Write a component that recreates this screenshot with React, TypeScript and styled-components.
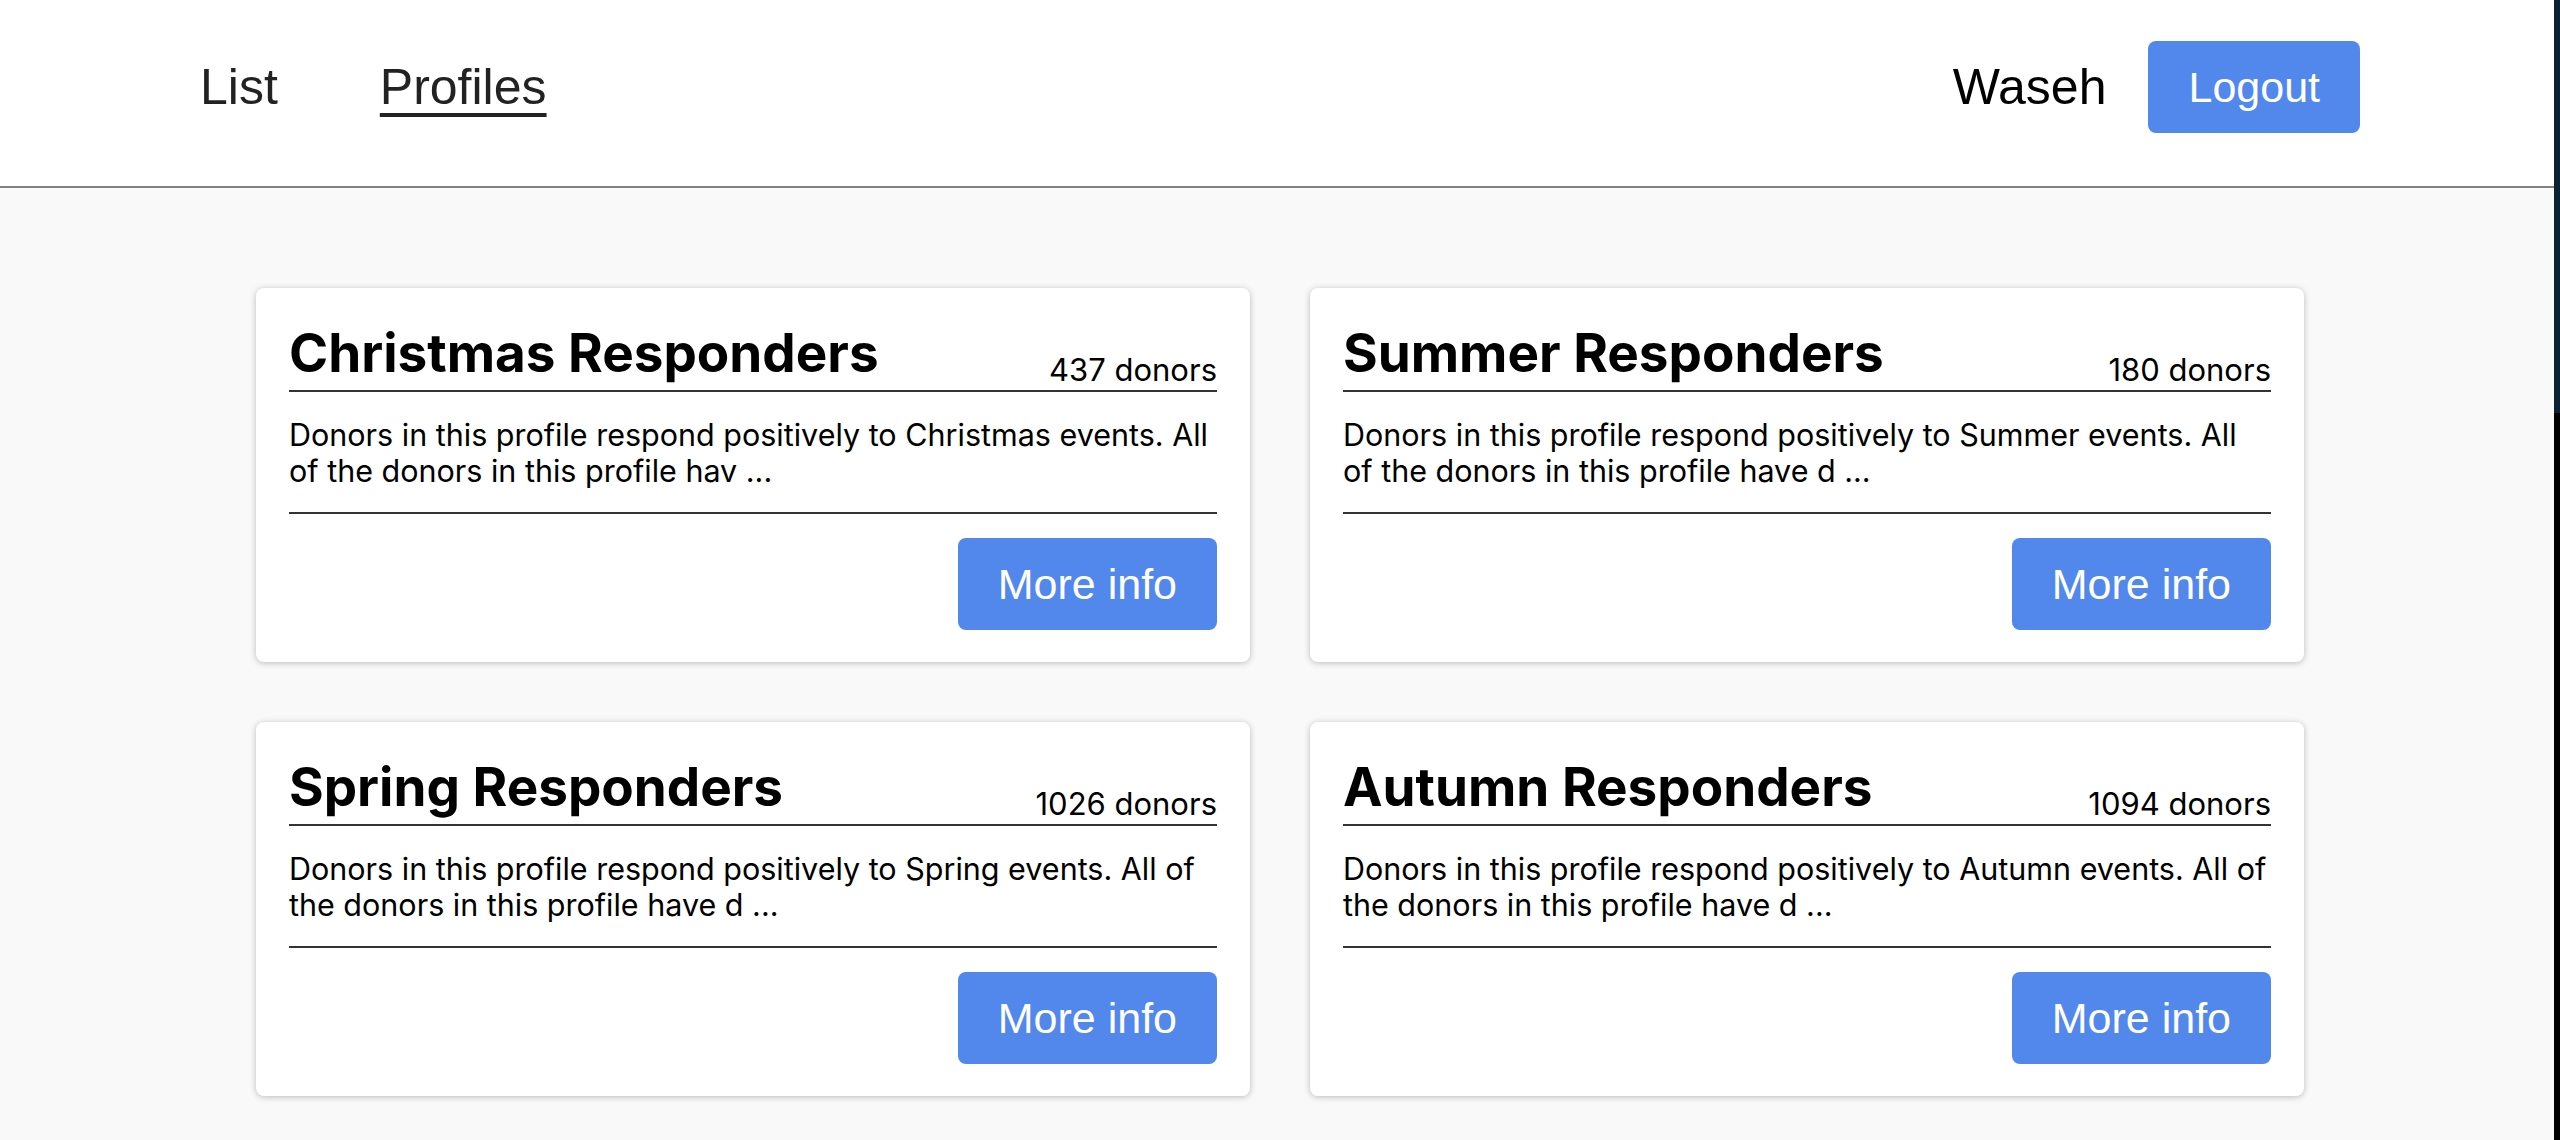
import React from "react";
import styled, { createGlobalStyle } from "styled-components";

const GlobalStyle = createGlobalStyle`
  html, body {
    margin: 0;
    padding: 0;
    background: #f9f9f9;
  }
  body {
    min-height: 100vh;
    font-family: Inter, "Liberation Sans", sans-serif;
  }
  * { box-sizing: border-box; }
`;

const Page = styled.div`
  min-height: 100vh;
  background: #f9f9f9;
`;

const Header = styled.header`
  height: 188px;
  background: #ffffff;
  border-bottom: 2px solid #808080;
  display: flex;
  align-items: center;
  justify-content: space-between;
  padding: 0 200px 12px 200px;
`;

const Nav = styled.nav`
  display: flex;
  align-items: center;
  gap: 102px;
`;

const NavLink = styled.a<{ $active?: boolean }>`
  font-family: "Liberation Sans", Arial, sans-serif;
  font-size: 50px;
  color: #222222;
  text-decoration: ${(p) => (p.$active ? "underline" : "none")};
  text-decoration-thickness: 4px;
  text-underline-offset: 9px;
  cursor: pointer;
`;

const UserArea = styled.div`
  display: flex;
  align-items: center;
  gap: 42px;
`;

const UserName = styled.span`
  font-family: "Liberation Sans", Arial, sans-serif;
  font-size: 50px;
  color: #000000;
`;

const Button = styled.button`
  font-family: "Liberation Sans", Arial, sans-serif;
  font-size: 43px;
  color: #ffffff;
  background: #5288ec;
  border: none;
  border-radius: 8px;
  height: 92px;
  padding: 0 40px;
  cursor: pointer;
`;

const Main = styled.main`
  padding: 100px 0 44px;
  display: grid;
  grid-template-columns: repeat(2, 994px);
  justify-content: center;
  gap: 60px;
`;

const Card = styled.article`
  background: #ffffff;
  border-radius: 8px;
  box-shadow: 0 1px 6px rgba(0, 0, 0, 0.25);
  padding: 33px 33px 32px 33px;
  display: flex;
  flex-direction: column;
`;

const CardHead = styled.div`
  display: flex;
  justify-content: space-between;
  align-items: flex-end;
  padding-bottom: 5px;
  border-bottom: 2px solid #333333;
`;

const Title = styled.h2`
  margin: 0;
  font-family: Inter, "Liberation Sans", sans-serif;
  font-weight: 700;
  font-size: 53px;
  line-height: 64px;
  color: #000000;
`;

const Count = styled.span`
  font-family: Inter, "Liberation Sans", sans-serif;
  font-size: 31px;
  line-height: 31px;
  color: #000000;
`;

const Description = styled.p`
  margin: 0;
  padding: 25px 0 23px;
  font-family: Inter, "Liberation Sans", sans-serif;
  font-size: 30.5px;
  line-height: 36px;
  color: #000000;
  border-bottom: 2px solid #333333;
`;

const CardFoot = styled.div`
  display: flex;
  justify-content: flex-end;
  padding-top: 24px;
`;

const WindowEdge = styled.div`
  position: fixed;
  top: 0;
  right: 0;
  width: 6px;
  height: 100vh;
  background: linear-gradient(to bottom, #0b2233 0, #0b2233 413px, #000000 413px);
`;

type Profile = { title: string; count: number; text: string };

const profiles: Profile[] = [
  {
    title: "Christmas Responders",
    count: 437,
    text: "Donors in this profile respond positively to Christmas events. All of the donors in this profile hav ...",
  },
  {
    title: "Summer Responders",
    count: 180,
    text: "Donors in this profile respond positively to Summer events. All of the donors in this profile have d ...",
  },
  {
    title: "Spring Responders",
    count: 1026,
    text: "Donors in this profile respond positively to Spring events. All of the donors in this profile have d ...",
  },
  {
    title: "Autumn Responders",
    count: 1094,
    text: "Donors in this profile respond positively to Autumn events. All of the donors in this profile have d ...",
  },
];

export default function App() {
  return (
    <Page>
      <GlobalStyle />
      <Header>
        <Nav>
          <NavLink>List</NavLink>
          <NavLink $active>Profiles</NavLink>
        </Nav>
        <UserArea>
          <UserName>Waseh</UserName>
          <Button>Logout</Button>
        </UserArea>
      </Header>
      <Main>
        {profiles.map((p) => (
          <Card key={p.title}>
            <CardHead>
              <Title>{p.title}</Title>
              <Count>{p.count} donors</Count>
            </CardHead>
            <Description>{p.text}</Description>
            <CardFoot>
              <Button>More info</Button>
            </CardFoot>
          </Card>
        ))}
      </Main>
      <WindowEdge />
    </Page>
  );
}
